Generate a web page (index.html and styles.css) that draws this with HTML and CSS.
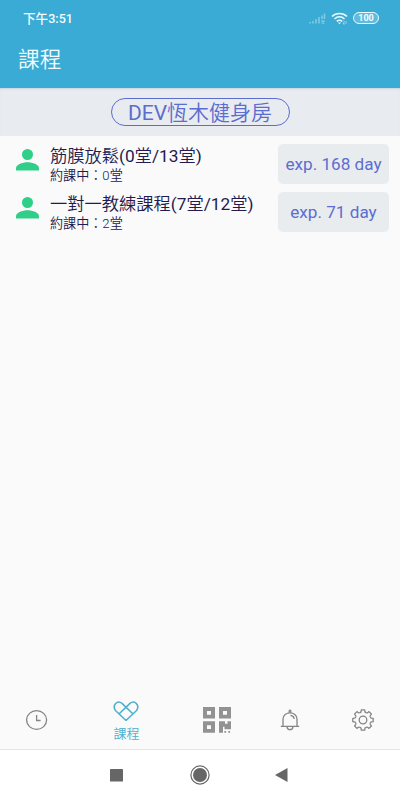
FILE: index.html
```html
<!DOCTYPE html>
<html lang="zh-Hant">
<head>
<meta charset="utf-8">
<title>課程</title>
<link rel="stylesheet" href="styles.css">
</head>
<body>
<div class="screen">
  <header class="header">
    <div class="status">
      <span class="time">下午3:51</span>
      <svg class="signal" width="17" height="13" viewBox="0 0 17 13"><path d="M1 11.500V10M4 11.500V9M7 11.500V7M10 11.500V5M13 7V3.500M15.500 7V1.500M12.500 8.500l3 3M15.500 8.500l-3 3"/></svg>
      <svg class="wifi" width="17" height="13" viewBox="0 0 17 13"><path d="M1 4.500C5 .5 12 .5 16 4.500M3.500 7C6.500 4.200 10.500 4.200 13.500 7M5.800 9.400C7.400 8 9.600 8 11.200 9.400"/><path class="solid" d="M6.900 10.500h3.200L8.500 12.300z"/><path class="thin" d="M13 8.500v4M12 11l1 1.500M15 12V9"/></svg>
      <span class="battery">100</span>
    </div>
    <h1 class="title">課程</h1>
  </header>
  <div class="venue"><span class="pill"><span class="latin">DEV</span>恆木健身房</span></div>
  <main class="list">
    <div class="row">
      <svg class="person" width="23" height="22" viewBox="0 0 23 22"><circle cx="11.500" cy="5.500" r="5.500"/><path d="M0 21.500v-2.300C0 15.500 6.500 13.300 11.500 13.300S23 15.500 23 19.200v2.300z"/></svg>
      <div class="info"><div class="name">筋膜放鬆<span class="latin">(0</span>堂<span class="latin">/13</span>堂<span class="latin">)</span></div><div class="sub">約課中：0堂</div></div>
      <div class="exp">exp. 168 day</div>
    </div>
    <div class="row">
      <svg class="person" width="23" height="22" viewBox="0 0 23 22"><circle cx="11.500" cy="5.500" r="5.500"/><path d="M0 21.500v-2.300C0 15.500 6.500 13.300 11.500 13.300S23 15.500 23 19.200v2.300z"/></svg>
      <div class="info"><div class="name">一對一教練課程<span class="latin">(7</span>堂<span class="latin">/12</span>堂<span class="latin">)</span></div><div class="sub">約課中：2堂</div></div>
      <div class="exp">exp. 71 day</div>
    </div>
  </main>
  <nav class="tabs">
    <div class="tab"><svg width="22" height="22" viewBox="0 0 22 22"><ellipse cx="10.600" cy="11" rx="10" ry="9.400"/><path d="M10.600 6v5.500h4"/></svg></div>
    <div class="tab active"><svg width="26" height="21" viewBox="0 0 26 21"><path d="M13 19.500L2.700 9.800C-1.300 5 4 -1.500 9 2.400L19.800 12.800M13 19.500L23.300 9.800C27.300 5 22 -1.500 17 2.400L6.200 12.800"/></svg><span>課程</span></div>
    <div class="tab qr"><svg width="28" height="26" viewBox="0 0 28 26"><path class="fill" fill-rule="evenodd" d="M0 0h12v11.500H0zM4 4v3.700h4V4zM16 0h12v11.500H16zM20 4v3.700h4V4zM0 14.300h12v11.500H0zM4 18.200v3.700h4v-3.700zM16 14.300h6v2.500h2.500v-2.500H28v8H21.500v-2.500H20v6h-4zM21.300 24h1.800v1.800h-1.800zM25.300 24h1.800v1.800h-1.800z"/></svg></div>
    <div class="tab bell"><svg width="20" height="22" viewBox="0 0 20 22"><path d="M.8 17.300h18.400M3 17V10C3 1.800 17 1.800 17 10v7M10.500 6.300c2.300.3 3.500 1.500 3.800 3.500M7 17.800c.5 3.700 5.500 3.700 6 0"/><path class="fill" d="M8.500 4V2c0-2 3-2 3 0v2z"/></svg></div>
    <div class="tab gear"><svg width="24" height="24" viewBox="-12 -12 24 24">
      <defs><path id="tooth" d="M-3.060 -7.390Q-2.100 -7.500 -1.900 -8.500L-1.700 -10.200H1.700L1.900 -8.500Q2.100 -7.500 3.060 -7.390"/></defs>
      <use href="#tooth"/><use href="#tooth" transform="rotate(45)"/><use href="#tooth" transform="rotate(90)"/><use href="#tooth" transform="rotate(135)"/><use href="#tooth" transform="rotate(180)"/><use href="#tooth" transform="rotate(225)"/><use href="#tooth" transform="rotate(270)"/><use href="#tooth" transform="rotate(315)"/><circle r="3.800"/>
    </svg></div>
  </nav>
  <footer class="system">
    <svg width="13" height="13" viewBox="0 0 13 13"><rect width="13" height="12.500" rx=".5"/></svg>
    <svg width="20" height="20" viewBox="0 0 20 20"><circle class="ring" cx="10" cy="10" r="9.100"/><circle cx="10" cy="10" r="7"/></svg>
    <svg width="13" height="14" viewBox="0 0 13 14"><path d="M0 7L12.500 0v14z"/></svg>
  </footer>
</div>
</body>
</html>
```
FILE: styles.css
```css
* { box-sizing: border-box; }
body { margin: 0; font-family: Roboto, "Noto Sans CJK TC", sans-serif; }
.screen { width: 400px; height: 800px; display: flex; flex-direction: column; background: #fafafa; overflow: hidden; }
.header { height: 88px; background: #39abd4; color: #f4fcff; flex: none; }
.status { height: 36px; padding: 0 21px 0 23px; display: flex; align-items: center; }
.time { font-size: 12.600px; font-weight: 500; line-height: 18px; margin-right: auto; padding-top: 1px; }
.status svg { fill: none; stroke: #e8fbff; stroke-width: 1.600; }
.status .signal { opacity: .4; margin-right: 5px; }
.status .wifi { margin-right: 5px; }
.wifi .solid { fill: #e8fbff; stroke: none; }
.wifi .thin { stroke-width: .7; opacity: .7; }
.battery { width: 26px; height: 12px; border: 1px solid #e8fbff; border-radius: 6px; background: #62bbdd; font-size: 9px; font-weight: 700; line-height: 10px; text-align: center; }
.title { margin: 0; padding: 8px 0 0 18px; font-size: 21.700px; font-weight: 350; line-height: 32px; }
.venue { height: 48px; background: #e8ebef; display: flex; justify-content: center; align-items: center; box-shadow: inset 0 2px 2px -1px #c6d5df; flex: none; }
.pill { width: 179px; height: 28px; border: 1px solid #5c6dd0; border-radius: 14px; color: #5c6dd0; font-size: 21px; font-weight: 350; line-height: 28px; text-align: center; white-space: nowrap; }
.latin { font-weight: 400; }
.list { flex: 1; padding: 8px 11px 0 16px; }
.row { display: flex; height: 47.500px; align-items: flex-start; }
.person { margin-top: 5px; fill: #2fce89; }
.info { margin-left: 11px; flex: 1; white-space: nowrap; color: #211b50; }
.name { font-size: 17.250px; font-weight: 350; line-height: 22px; margin-top: 1px; }
.sub { font-size: 13.100px; font-weight: 350; line-height: 16px; margin-top: 1px; }
.exp { width: 111px; height: 40px; border-radius: 5px; background: #e8ecef; color: #5c6dd0; font-size: 17.150px; line-height: 40px; text-align: center; }
.tabs { height: 60px; display: grid; grid-template-columns: 73px 107px 73px 73px 74px; align-items: center; justify-items: center; border-bottom: 1px solid #e5e5e5; flex: none; }
.tab { display: flex; flex-direction: column; align-items: center; }
.tab svg { fill: none; stroke: #858585; stroke-width: 1.300; stroke-linejoin: round; }
.tab .fill { fill: #929292; stroke: none; }
.tab.active { color: #4bafcf; font-size: 13px; font-weight: 350; line-height: 18px; }
.tab.active svg { stroke: #4bafcf; stroke-width: 1.500; margin-bottom: 3px; margin-top: 5px; }
.system { height: 50px; background: #fff; display: flex; align-items: center; padding: 0 112px 0 110px; justify-content: space-between; flex: none; fill: #666; }
.system svg:nth-child(2) { margin-left: 1px; }
.ring { fill: none; stroke: #666; stroke-width: 1.200; }
```
